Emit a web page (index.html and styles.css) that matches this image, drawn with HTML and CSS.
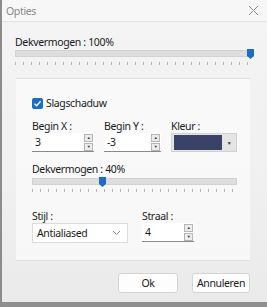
FILE: index.html
```html
<!DOCTYPE html>
<html>
<head>
  <title>Opties</title>
  <link rel="stylesheet" href="styles.css">
</head>
<body>
  <div class="window">
    <!-- Title bar -->
    <div class="titlebar">
      <span class="title">Opties</span>
      <svg class="close" width="11" height="11" viewBox="0 0 11 11"><path d="M1 1 L10 10 M10 1 L1 10" stroke="#8f8f8f" stroke-width="1"/></svg>
    </div>

    <div class="content">
      <div class="label">Dekvermogen : 100%</div>
      <div class="slider wide">
        <div class="track"></div>
        <div class="thumb" style="left: 232px"></div>
      </div>
      <div class="ticks wide"></div>

      <!-- Shadow group -->
      <div class="group">
        <label class="check">
          <span class="box">
            <svg width="9" height="9" viewBox="0 0 9 9"><path d="M1.5 4.8 L3.6 6.8 L7.6 2.2" fill="none" stroke="#fff" stroke-width="1.3"/></svg>
          </span>
          Slagschaduw
        </label>

        <div class="row three">
          <div class="field fx">
            <div class="label">Begin X :</div>
            <div class="spin"><span class="val">3</span><span class="arrows"><i>&#9650;</i><i>&#9660;</i></span></div>
          </div>
          <div class="field fy">
            <div class="label">Begin Y :</div>
            <div class="spin"><span class="val">-3</span><span class="arrows"><i>&#9650;</i><i>&#9660;</i></span></div>
          </div>
          <div class="field fc">
            <div class="label">Kleur :</div>
            <div class="color"><span class="swatch"></span><span class="drop">&#9660;</span></div>
          </div>
        </div>

        <div class="label opac">Dekvermogen : 40%</div>
        <div class="slider inner">
          <div class="track"></div>
          <div class="thumb" style="left: 67px"></div>
        </div>
        <div class="ticks inner"></div>

        <div class="row two">
          <div class="field">
            <div class="label">Stijl :</div>
            <div class="select"><span>Antialiased</span>
              <svg width="9" height="6" viewBox="0 0 9 6"><path d="M1 1 L4.5 4.5 L8 1" fill="none" stroke="#8a8a8a" stroke-width="1"/></svg>
            </div>
          </div>
          <div class="field">
            <div class="label">Straal :</div>
            <div class="spin short"><span class="val">4</span><span class="arrows"><i>&#9650;</i><i>&#9660;</i></span></div>
          </div>
        </div>
      </div>

      <div class="buttons">
        <button class="ok">Ok</button>
        <button>Annuleren</button>
      </div>
    </div>
  </div>
</body>
</html>
```
FILE: styles.css
```css
/* Basic reset */
* {
  box-sizing: border-box;
  margin: 0;
  padding: 0;
}

body {
  font-family: "Noto Sans", "Open Sans", sans-serif;
  font-size: 10.5px;
  letter-spacing: -0.35px;
  color: #1a1a1a;
  background-color: #e9e9e9;
}

/* Dialog window */
.window {
  width: 267px;
  height: 307px;
  border-left: 2px solid #8c8c8c;
  border-bottom: 5px solid #8f8f8f;
  background: linear-gradient(180deg, #f4f4f4 0%, #f0f0f0 60%, #eaeaea 100%);
  display: flex;
  flex-direction: column;
}

.titlebar {
  height: 22px;
  display: flex;
  justify-content: space-between;
  align-items: center;
  padding: 0 8px 0 4px;
  border-bottom: 1px solid #e4e4e4;
  background-color: #f7f7f7;
}

.title {
  color: #8a8a8a;
  font-size: 10.5px;
}

.content {
  padding: 13px 15px 0 13px;
}

.label {
  line-height: 14px;
}

/* Sliders */
.slider {
  position: relative;
  height: 10px;
}

.slider .track {
  position: absolute;
  left: 0;
  right: 0;
  top: 1px;
  height: 7px;
  background-color: #dedede;
  border: 1px solid #d2d2d2;
}

.slider .thumb {
  position: absolute;
  top: 0;
  width: 7px;
  height: 10px;
  background-color: #1a6fc4;
  clip-path: polygon(0 0, 100% 0, 100% 70%, 50% 100%, 0 70%);
}

.slider.wide { width: 239px; }
.slider.inner { width: 205px; margin-top: 1px; }

.ticks {
  height: 3px;
  margin-top: 3px;
  background-image: repeating-linear-gradient(90deg, #b5b5b5 0 1px, transparent 1px 8px);
}

.ticks.wide { width: 239px; }
.ticks.inner { width: 205px; margin-top: 2px; }

/* Group box */
.group {
  margin: 13px 0 0 1px;
  width: 234px;
  height: 183px;
  border-top: 1px solid #e0e0e0;
  border-bottom: 1px solid #e0e0e0;
  background-color: rgba(251, 251, 251, 0.75);
  padding: 18px 0 0 16px;
}

.check {
  display: flex;
  align-items: center;
  gap: 3px;
  height: 12px;
  line-height: 12px;
}

.box {
  width: 11px;
  height: 11px;
  border-radius: 2px;
  background-color: #1a6fc4;
  display: flex;
  align-items: center;
  justify-content: center;
}

.row {
  display: flex;
}

.row.three {
  margin-top: 10px;
  gap: 10px;
}

.fx { width: 62px; }
.fy { width: 57px; }
.fc { width: 66px; }

.row.two {
  margin-top: 17px;
  gap: 14px;
}

.opac {
  margin-top: 10px;
}

/* Spin inputs */
.spin {
  display: flex;
  align-items: center;
  justify-content: space-between;
  height: 19px;
  background-color: #ffffff;
  border-bottom: 1px solid #8a8a8a;
  padding: 0 1px 0 3px;
}

.spin.short { width: 52px; }

.arrows {
  display: flex;
  flex-direction: column;
  gap: 1px;
}

.arrows i {
  font-style: normal;
  font-size: 4px;
  line-height: 6px;
  width: 9px;
  text-align: center;
  color: #333;
  background-color: #ececec;
  border: 1px solid #b5b5b5;
}

/* Colour picker */
.color {
  display: flex;
  align-items: center;
  height: 19px;
  background-color: #e4e4e4;
  border: 1px solid #d2d2d2;
  padding: 1px 0 1px 2px;
}

.swatch {
  width: 48px;
  height: 15px;
  background-color: #3b4267;
}

.drop {
  flex: 1;
  text-align: center;
  font-size: 5px;
  color: #333;
}

/* Select */
.select {
  width: 96px;
  height: 20px;
  display: flex;
  align-items: center;
  justify-content: space-between;
  padding: 0 6px 0 4px;
  background-color: #ffffff;
  border: 1px solid #dcdcdc;
}

/* Buttons */
.buttons {
  display: flex;
  justify-content: flex-end;
  gap: 14px;
  margin-top: 12px;
  padding-right: 2px;
}

button {
  width: 58px;
  height: 20px;
  font-family: "Noto Sans", "Open Sans", sans-serif;
  font-size: 10.5px;
  letter-spacing: -0.35px;
  color: #1a1a1a;
  background-color: #fdfdfd;
  border: 1px solid #d4d4d4;
  border-radius: 3px;
}

button.ok {
  width: 60px;
}
```
